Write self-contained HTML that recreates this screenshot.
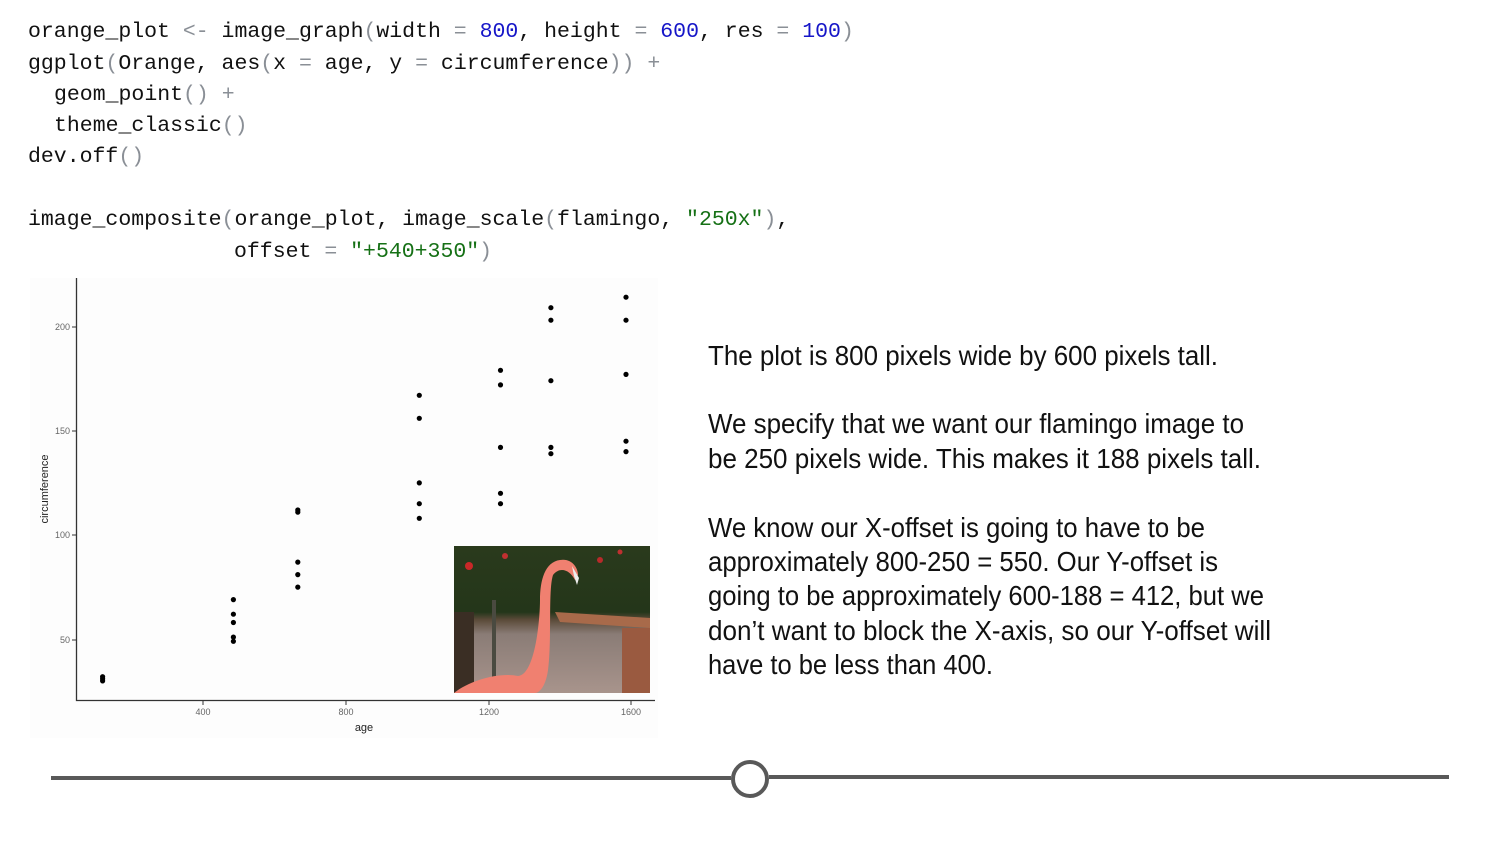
<!DOCTYPE html>
<html><head><meta charset="utf-8"><style>
html,body{margin:0;padding:0;background:#fff;}
svg{display:block}
.c{font-family:"Liberation Mono",monospace;font-size:21.5px;fill:#111}
.o{fill:#8a8f96}.n{fill:#1616c8}.s{fill:#157015}
.t{font-family:"Liberation Sans Narrow","Liberation Sans",sans-serif;font-size:28px;fill:#111}
.ax{font-family:"Liberation Sans",sans-serif;font-size:9px;fill:#666}
</style></head><body>
<svg width="1500" height="844" viewBox="0 0 1500 844" xmlns="http://www.w3.org/2000/svg">
<rect width="1500" height="844" fill="#fff"/>
<g class="c">
<text x="28" y="37">orange_plot <tspan class="o">&lt;-</tspan> image_graph<tspan class="o">(</tspan>width <tspan class="o">=</tspan> <tspan class="n">800</tspan>, height <tspan class="o">=</tspan> <tspan class="n">600</tspan>, res <tspan class="o">=</tspan> <tspan class="n">100</tspan><tspan class="o">)</tspan></text>
<text x="28" y="69">ggplot<tspan class="o">(</tspan>Orange, aes<tspan class="o">(</tspan>x <tspan class="o">=</tspan> age, y <tspan class="o">=</tspan> circumference<tspan class="o">))</tspan> <tspan class="o">+</tspan></text>
<text x="54" y="100">geom_point<tspan class="o">()</tspan> <tspan class="o">+</tspan></text>
<text x="54" y="131">theme_classic<tspan class="o">()</tspan></text>
<text x="28" y="162">dev.off<tspan class="o">()</tspan></text>
<text x="28" y="225">image_composite<tspan class="o">(</tspan>orange_plot, image_scale<tspan class="o">(</tspan>flamingo, <tspan class="s">"250x"</tspan><tspan class="o">)</tspan>,</text>
<text x="234" y="257">offset <tspan class="o">=</tspan> <tspan class="s">"+540+350"</tspan><tspan class="o">)</tspan></text>
</g>
<!-- plot -->
<rect x="30" y="278" width="628" height="460" fill="#fdfdfd"/>
<path d="M76.5 278V700.5H655" stroke="#333" stroke-width="1.3" fill="none"/>
<g stroke="#333" stroke-width="1">
<path d="M72 327H76M72 431H76M72 535H76M72 640H76M203 701V705M346 701V705M489 701V705M631 701V705"/>
</g>
<g class="ax">
<text x="70" y="330" text-anchor="end">200</text>
<text x="70" y="434" text-anchor="end">150</text>
<text x="70" y="538" text-anchor="end">100</text>
<text x="70" y="643" text-anchor="end">50</text>
<text x="203" y="715" text-anchor="middle">400</text>
<text x="346" y="715" text-anchor="middle">800</text>
<text x="489" y="715" text-anchor="middle">1200</text>
<text x="631" y="715" text-anchor="middle">1600</text>
<text x="364" y="731" text-anchor="middle" font-size="11" fill="#222">age</text>
<text transform="translate(48,489) rotate(-90)" text-anchor="middle" font-size="11" fill="#222">circumference</text>
</g>
<!-- flamingo -->
<defs>
<linearGradient id="bg" x1="0" y1="0" x2="0" y2="1">
<stop offset="0" stop-color="#2a3a1c"/><stop offset="0.45" stop-color="#24361a"/><stop offset="0.5" stop-color="#5a4a38"/><stop offset="0.6" stop-color="#8a7c76"/><stop offset="1" stop-color="#a8948c"/>
</linearGradient>
</defs>
<rect x="454" y="546" width="196" height="147" fill="url(#bg)"/>
<path d="M555 612L650 618V628L560 622Z" fill="#a86a4a"/>
<circle cx="469" cy="566" r="4" fill="#c82828"/><circle cx="505" cy="556" r="3" fill="#c03030"/><circle cx="600" cy="560" r="3" fill="#b82a2a"/><circle cx="620" cy="552" r="2.5" fill="#c03030"/>
<rect x="622" y="628" width="28" height="65" fill="#9a5a40"/>
<rect x="454" y="612" width="20" height="81" fill="#3a2e24"/>
<rect x="492" y="600" width="4" height="80" fill="#4a4a40"/>
<path d="M454 693C470 680 500 672 518 676C535 675 540 620 540 600C540 580 545 562 560 560C572 558 578 568 578 575L575 580C570 570 560 566 553 575C548 590 552 640 548 670C546 685 540 693 535 693Z" fill="#f08070"/>
<path d="M572 566L579 578L577 585L574 576Z" fill="#eee"/>
<!-- right text -->
<g class="t">
<text x="708" y="365" textLength="510" lengthAdjust="spacingAndGlyphs">The plot is 800 pixels wide by 600 pixels tall.</text>
<text x="708" y="433" textLength="536" lengthAdjust="spacingAndGlyphs">We specify that we want our flamingo image to</text>
<text x="708" y="468" textLength="553" lengthAdjust="spacingAndGlyphs">be 250 pixels wide. This makes it 188 pixels tall.</text>
<text x="708" y="537" textLength="497" lengthAdjust="spacingAndGlyphs">We know our X-offset is going to have to be</text>
<text x="708" y="571" textLength="510" lengthAdjust="spacingAndGlyphs">approximately 800-250 = 550. Our Y-offset is</text>
<text x="708" y="605" textLength="556" lengthAdjust="spacingAndGlyphs">going to be approximately 600-188 = 412, but we</text>
<text x="708" y="640" textLength="563" lengthAdjust="spacingAndGlyphs">don’t want to block the X-axis, so our Y-offset will</text>
<text x="708" y="674" textLength="285" lengthAdjust="spacingAndGlyphs">have to be less than 400.</text>
</g>
<!-- slider -->
<path d="M51 778H731M769 777H1449" stroke="#595959" stroke-width="4"/>
<circle cx="750" cy="779" r="17" fill="#fff" stroke="#595959" stroke-width="4"/>
<g fill="#000">
<circle cx="102.6" cy="676.7" r="2.6"/><circle cx="102.6" cy="680.9" r="2.6"/><circle cx="102.6" cy="678.8" r="2.6"/>
<circle cx="233.4" cy="622.5" r="2.6"/><circle cx="233.4" cy="599.6" r="2.6"/><circle cx="233.4" cy="637.1" r="2.6"/><circle cx="233.4" cy="614.2" r="2.6"/><circle cx="233.4" cy="641.3" r="2.6"/>
<circle cx="297.8" cy="562.1" r="2.6"/><circle cx="297.8" cy="512.1" r="2.6"/><circle cx="297.8" cy="587.1" r="2.6"/><circle cx="297.8" cy="510.0" r="2.6"/><circle cx="297.8" cy="574.6" r="2.6"/>
<circle cx="419.3" cy="503.7" r="2.6"/><circle cx="419.3" cy="418.3" r="2.6"/><circle cx="419.3" cy="518.3" r="2.6"/><circle cx="419.3" cy="395.3" r="2.6"/><circle cx="419.3" cy="482.9" r="2.6"/>
<circle cx="500.5" cy="493.3" r="2.6"/><circle cx="500.5" cy="384.9" r="2.6"/><circle cx="500.5" cy="503.7" r="2.6"/><circle cx="500.5" cy="370.3" r="2.6"/><circle cx="500.5" cy="447.4" r="2.6"/>
<circle cx="550.9" cy="447.4" r="2.6"/><circle cx="550.9" cy="320.2" r="2.6"/><circle cx="550.9" cy="453.7" r="2.6"/><circle cx="550.9" cy="307.7" r="2.6"/><circle cx="550.9" cy="380.7" r="2.6"/>
<circle cx="626" cy="441.2" r="2.6"/><circle cx="626" cy="320.2" r="2.6"/><circle cx="626" cy="451.6" r="2.6"/><circle cx="626" cy="297.2" r="2.6"/><circle cx="626" cy="374.4" r="2.6"/>
</g>
</svg>
</body></html>
